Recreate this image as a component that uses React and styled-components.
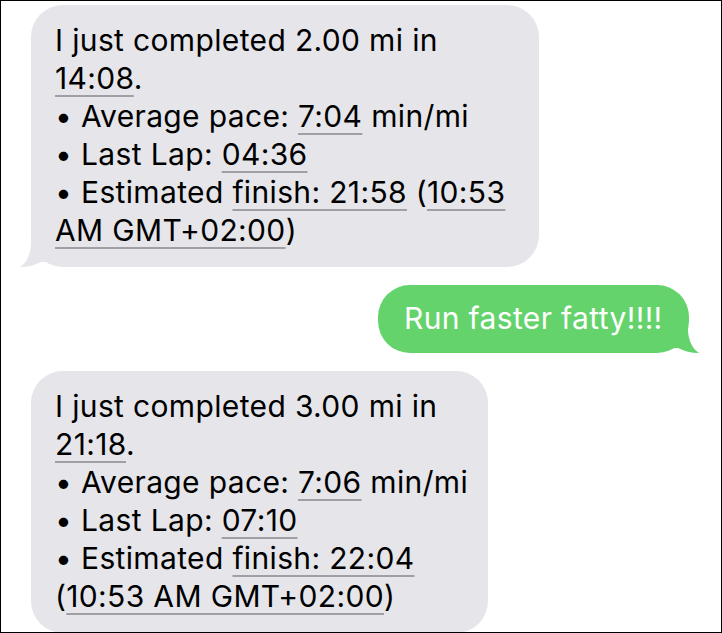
import React from "react";
import styled, { createGlobalStyle } from "styled-components";

const Global = createGlobalStyle`
  html, body { margin: 0; padding: 0; background: #fff; }
  body { font-family: Inter, "Noto Sans", sans-serif; }
`;

const Frame = styled.div`
  width: 722px;
  height: 633px;
  box-sizing: border-box;
  border: 1px solid #000;
  overflow: hidden;
  display: flex;
  flex-direction: column;
  padding: 4px 0 0 30px;
  gap: 18px;
`;

const Row = styled.div`
  display: flex;
  justify-content: ${(p) => (p.$mine ? "flex-end" : "flex-start")};
  padding-right: ${(p) => (p.$mine ? "32px" : "0")};
`;

const Bubble = styled.div`
  position: relative;
  box-sizing: border-box;
  width: ${(p) => p.$w}px;
  background: ${(p) => (p.$mine ? "#64d36c" : "#e5e5ea")};
  color: ${(p) => (p.$mine ? "#fff" : "#000")};
  border-radius: 32px;
  padding: ${(p) => (p.$mine ? "14px 0 15px 26px" : "16px 0 18px 24px")};
  font-size: 30px;
  line-height: ${(p) => (p.$mine ? "39px" : "38px")};
  letter-spacing: 0.35px;
  white-space: nowrap;
`;

const Line = styled.div``;

const Link = styled.span`
  text-decoration: underline;
  text-decoration-color: #a0a0a4;
  text-decoration-thickness: 1.5px;
  text-underline-offset: 6px;
`;

const Tail = styled.svg`
  position: absolute;
  bottom: 0;
  width: 30px;
  height: 30px;
  ${(p) => (p.$mine ? "right: -10px; transform: scaleX(-1);" : "left: -11px;")}
`;

const BubbleTail = ({ mine }) => (
  <Tail $mine={mine} viewBox="0 0 30 30">
    <path
      d="M11 0 C12 14 8 25 0 30 C8 30 15 28 21 25 L30 25 L30 0 Z"
      fill={mine ? "#64d36c" : "#e5e5ea"}
    />
  </Tail>
);

export default function App() {
  return (
    <>
      <Global />
      <Frame>
        <Row>
          <Bubble $w={508}>
            <Line>I just completed 2.00 mi in</Line>
            <Line>
              <Link>14:08</Link>.
            </Line>
            <Line>
              • Average pace: <Link>7:04</Link> min/mi
            </Line>
            <Line>
              • Last Lap: <Link>04:36</Link>
            </Line>
            <Line>
              • Estimated <Link>finish: 21:58</Link> (<Link>10:53</Link>
            </Line>
            <Line>
              <Link>AM GMT+02:00</Link>)
            </Line>
            <BubbleTail />
          </Bubble>
        </Row>
        <Row $mine>
          <Bubble $mine $w={311}>
            <Line>Run faster fatty!!!!</Line>
            <BubbleTail mine />
          </Bubble>
        </Row>
        <Row>
          <Bubble $w={457}>
            <Line>I just completed 3.00 mi in</Line>
            <Line>
              <Link>21:18</Link>.
            </Line>
            <Line>
              • Average pace: <Link>7:06</Link> min/mi
            </Line>
            <Line>
              • Last Lap: <Link>07:10</Link>
            </Line>
            <Line>
              • Estimated <Link>finish: 22:04</Link>
            </Line>
            <Line>
              (<Link>10:53 AM GMT+02:00</Link>)
            </Line>
          </Bubble>
        </Row>
      </Frame>
    </>
  );
}
